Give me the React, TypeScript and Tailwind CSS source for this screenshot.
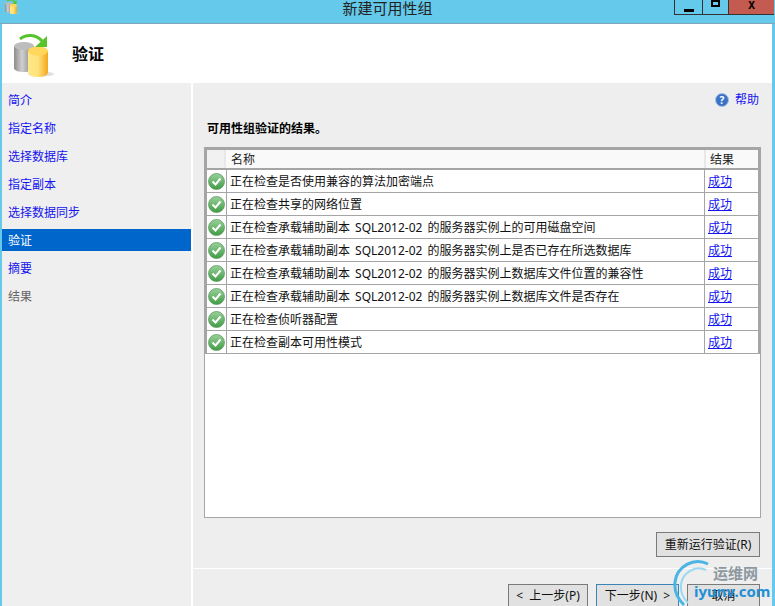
const FONT = "font-['Noto_Sans','Noto_Sans_CJK_SC',sans-serif]";

const NAV = [
  { label: '简介', state: 'link' },
  { label: '指定名称', state: 'link' },
  { label: '选择数据库', state: 'link' },
  { label: '指定副本', state: 'link' },
  { label: '选择数据同步', state: 'link' },
  { label: '验证', state: 'active' },
  { label: '摘要', state: 'link' },
  { label: '结果', state: 'off' },
];

const ROWS = [
  '正在检查是否使用兼容的算法加密端点',
  '正在检查共享的网络位置',
  '正在检查承载辅助副本 SQL2012-02 的服务器实例上的可用磁盘空间',
  '正在检查承载辅助副本 SQL2012-02 的服务器实例上是否已存在所选数据库',
  '正在检查承载辅助副本 SQL2012-02 的服务器实例上数据库文件位置的兼容性',
  '正在检查承载辅助副本 SQL2012-02 的服务器实例上数据库文件是否存在',
  '正在检查侦听器配置',
  '正在检查副本可用性模式',
];

function DbIcon({ size }: { size: number }) {
  return (
    <svg width={size} height={size * 1.1} viewBox="0 0 40 44">
      <defs>
        <linearGradient id="gray" x1="0" x2="1" y1="0" y2="0">
          <stop offset="0" stopColor="#8c8c8c" />
          <stop offset="0.4" stopColor="#d0d0d0" />
          <stop offset="1" stopColor="#777" />
        </linearGradient>
        <linearGradient id="gold" x1="0" x2="1" y1="0" y2="0">
          <stop offset="0" stopColor="#ffe88a" />
          <stop offset="0.5" stopColor="#ffe27a" />
          <stop offset="1" stopColor="#f3a81c" />
        </linearGradient>
      </defs>
      <ellipse cx="27" cy="41" rx="13" ry="2.500" fill="#ccc" opacity="0.6" />
      <path d="M0 13v22c0 2.500 4.500 4 10 4s10-1.500 10-4V13z" fill="url(#gray)" />
      <ellipse cx="10" cy="13" rx="10" ry="4" fill="#bdbdbd" />
      <path d="M14 18v21c0 3 4 5 10 5s10-2 10-5V18z" fill="url(#gold)" />
      <ellipse cx="24" cy="18" rx="10" ry="4.500" fill="#ffd75a" />
      <path d="M6 6C12 1 22 1 28 8" fill="none" stroke="#58c42c" strokeWidth="3" />
      <path d="M33 3v11H21z" fill="#58c42c" />
    </svg>
  );
}

function Check() {
  return (
    <svg width="17" height="17" viewBox="0 0 17 17">
      <defs>
        <linearGradient id="ok" x1="0" x2="0" y1="0" y2="1">
          <stop offset="0" stopColor="#9ad09a" />
          <stop offset="1" stopColor="#3f9c45" />
        </linearGradient>
      </defs>
      <circle cx="8.500" cy="8.500" r="8" fill="url(#ok)" stroke="#5d9c62" strokeWidth="0.8" />
      <path d="M4.500 8.500l3 3 5-6" fill="none" stroke="#fff" strokeWidth="2" />
    </svg>
  );
}

function Btn({ label, cls, focus }: { label: string; cls: string; focus?: boolean }) {
  return (
    <button
      type="button"
      className={`flex items-center justify-center whitespace-pre bg-[#e1e1e1] text-[12px] text-[#111] border ${focus ? 'border-[#3a84b8]' : 'border-[#7a7a7a]'} ${cls}`}
    >
      {label}
    </button>
  );
}

export default function App() {
  return (
    <div className={`relative flex h-[606px] w-[775px] flex-col overflow-hidden bg-[#64c9ea] ${FONT}`}>
      {/* title bar */}
      <div className="relative flex h-[24px] shrink-0 items-start justify-center border-b border-b-[#7fa6b6]">
        <div className="absolute left-[5px] top-[-1px]">
          <DbIcon size={14} />
        </div>
        <span className="text-[15px] leading-[16px] text-[#222]">新建可用性组</span>
        <div className="absolute right-[1px] top-0 flex h-[15px]">
          <div className="flex w-[28px] items-center justify-center border-b border-l border-[#333]">
            <div className="mt-[6px] h-[3px] w-[10px] bg-black" />
          </div>
          <div className="flex w-[26px] items-start justify-center border-b border-l border-[#333]">
            <div className="h-[7px] w-[9px] border-2 border-black" />
          </div>
          <div className="flex w-[46px] items-start justify-center border-b border-l border-[#333] bg-[#c35b50] text-[10px] font-bold leading-[10px] text-black">
            X
          </div>
        </div>
      </div>

      {/* dialog body */}
      <div className="ml-[2px] mr-[3px] flex min-h-0 flex-1 flex-col bg-white">
        <div className="flex h-[59px] shrink-0 items-center">
          <div className="ml-[12px] mr-[18px] mt-[2px]">
            <DbIcon size={40} />
          </div>
          <span className="text-[16px] font-bold text-black">验证</span>
        </div>

        <div className="flex min-h-0 flex-1">
          {/* steps */}
          <nav className="flex w-[189px] shrink-0 flex-col bg-[#efefef] pt-[3px]">
            {NAV.map((n) => (
              <div key={n.label} className="flex h-[28px] shrink-0 items-center">
                <div
                  className={`flex h-[22px] w-full items-center pl-[6px] pt-[2px] text-[12px] ${
                    n.state === 'active'
                      ? 'bg-[#0066cc] text-white'
                      : n.state === 'off'
                        ? 'text-[#666]'
                        : 'text-[#1414f0]'
                  }`}
                >
                  {n.label}
                </div>
              </div>
            ))}
          </nav>

          {/* content */}
          <div className="ml-[2px] flex min-w-0 flex-1 flex-col bg-[#eeeeee]">
            <div className="flex h-[33px] shrink-0 items-center justify-end gap-[6px] pr-[13px]">
              <svg width="14" height="14" viewBox="0 0 14 14">
                <circle cx="7" cy="7" r="6.500" fill="#3a72c8" stroke="#a8c0e4" />
                <text x="7" y="11" textAnchor="middle" fontSize="10" fontWeight="bold" fill="#fff">?</text>
              </svg>
              <span className="text-[12px] text-[#1414f0]">帮助</span>
            </div>

            <h2 className="ml-[14px] h-[31px] shrink-0 pt-[4px] text-[12px] font-bold leading-[18px] text-black">
              可用性组验证的结果。
            </h2>

            {/* results table */}
            <div className="ml-[11px] mr-[11px] flex h-[371px] shrink-0 flex-col border border-[#a5a5a5] bg-white">
              <div className="flex h-[22px] shrink-0 border-2 border-[#a5a5a5] bg-[#f9f9f9] text-[12px] text-[#222]">
                <div className="w-[19px] shrink-0 border-r-2 border-[#e8e8e8] bg-[#f1f1f1]" />
                <div className="flex flex-1 items-center pl-[5px] pt-[2px]">名称</div>
                <div className="flex w-[54px] shrink-0 items-center border-l-2 border-[#e8e8e8] pl-[4px] pt-[2px]">结果</div>
              </div>
              {ROWS.map((r) => (
                <div key={r} className="flex h-[23px] shrink-0 border-x-2 border-b border-[#a5a5a5] text-[12px] text-[#111]">
                  <div className="flex w-[20px] shrink-0 items-center justify-center border-r border-[#a5a5a5]">
                    <Check />
                  </div>
                  <div className="flex min-w-0 flex-1 items-center whitespace-pre pl-[3px] pt-[1px] [word-spacing:2px]">{r}</div>
                  <div className="flex w-[54px] shrink-0 items-center border-l border-[#a5a5a5] pl-[3px] pt-[1px] text-[#1414f0] underline">
                    成功
                  </div>
                </div>
              ))}
            </div>

            <div className="flex h-[50px] shrink-0 items-start justify-end pr-[12px] pt-[14px]">
              <Btn label="重新运行验证(R)" cls="h-[25px] w-[104px]" />
            </div>

            <div className="flex flex-1 items-start justify-end gap-[8px] border-t border-white pr-[12px] pt-[15px]">
              <Btn label="<  上一步(P)" cls="h-[23px] w-[80px]" />
              <Btn label="下一步(N)  >" cls="h-[23px] w-[83px]" focus />
              <Btn label="取消" cls="h-[23px] w-[73px]" />
            </div>
          </div>
        </div>
      </div>

      {/* watermark */}
      <div className="pointer-events-none absolute left-[672px] top-[558px] h-[48px] w-[103px]">
        <svg className="absolute left-0 top-0" width="46" height="48" viewBox="0 0 46 48">
          <path d="M36 6C22-1 5 8 3 24c-1 9 3 17 9 23" fill="none" stroke="#4ab4e4" strokeWidth="3" />
          <path d="M34 12C24 7 11 14 9 26c-1 7 2 14 7 19" fill="none" stroke="#9ad8f2" strokeWidth="2" />
        </svg>
        <span className="absolute left-[41px] top-[6px] text-[15px] font-bold leading-[18px] text-[#8d98a0]">运维网</span>
        <span className="absolute left-[22px] top-[24px] text-[15px] font-bold leading-[18px] text-[#1f8fd6]">iyunv.com</span>
      </div>
    </div>
  );
}
